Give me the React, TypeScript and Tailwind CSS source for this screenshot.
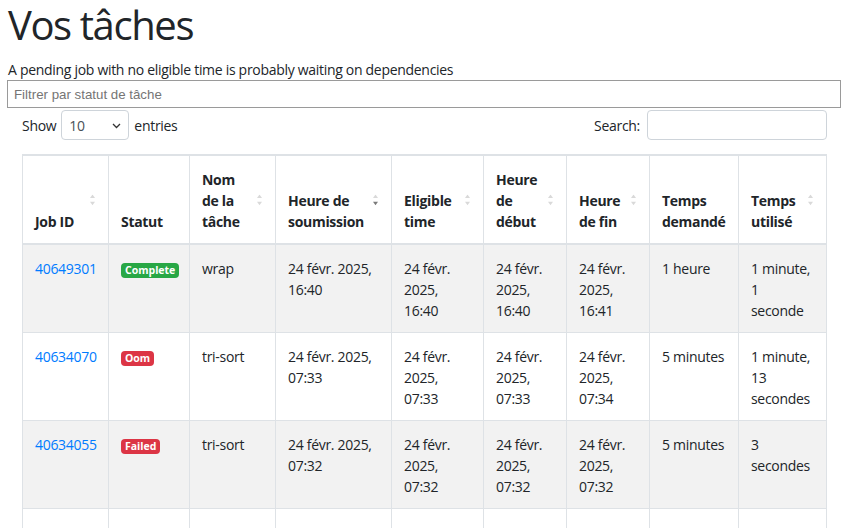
import React from "react";

type Col = { w: number; label: React.ReactNode; sort: "none" | "off" | "desc" };

const cols: Col[] = [
  { w: 87, label: <>Job ID</>, sort: "off" },
  { w: 81, label: <>Statut</>, sort: "none" },
  { w: 86, label: <>Nom<br />de la<br />tâche</>, sort: "off" },
  { w: 116, label: <>Heure de<br />soumission</>, sort: "desc" },
  { w: 92, label: <>Eligible<br />time</>, sort: "off" },
  { w: 83, label: <>Heure<br />de<br />début</>, sort: "off" },
  { w: 83, label: <>Heure<br />de fin</>, sort: "off" },
  { w: 89, label: <>Temps<br />demandé</>, sort: "none" },
  { w: 88, label: <>Temps<br />utilisé</>, sort: "off" },
];

type Row = {
  id: string;
  status: "Complete" | "Oom" | "Failed";
  name: string;
  submit: string[];
  eligible: string[];
  start: string[];
  end: string[];
  req: string;
  used: string[];
};

const rows: Row[] = [
  {
    id: "40649301",
    status: "Complete",
    name: "wrap",
    submit: ["24 févr. 2025,", "16:40"],
    eligible: ["24 févr.", "2025,", "16:40"],
    start: ["24 févr.", "2025,", "16:40"],
    end: ["24 févr.", "2025,", "16:41"],
    req: "1 heure",
    used: ["1 minute,", "1", "seconde"],
  },
  {
    id: "40634070",
    status: "Oom",
    name: "tri-sort",
    submit: ["24 févr. 2025,", "07:33"],
    eligible: ["24 févr.", "2025,", "07:33"],
    start: ["24 févr.", "2025,", "07:33"],
    end: ["24 févr.", "2025,", "07:34"],
    req: "5 minutes",
    used: ["1 minute,", "13", "secondes"],
  },
  {
    id: "40634055",
    status: "Failed",
    name: "tri-sort",
    submit: ["24 févr. 2025,", "07:32"],
    eligible: ["24 févr.", "2025,", "07:32"],
    start: ["24 févr.", "2025,", "07:32"],
    end: ["24 févr.", "2025,", "07:32"],
    req: "5 minutes",
    used: ["3", "secondes"],
  },
];

function SortIcon({ active }: { active: boolean }) {
  return (
    <svg
      width="5"
      height="11"
      viewBox="0 0 5 11"
      className="absolute right-[13px] top-1/2 -translate-y-1/2"
    >
      <path d="M2.5 0 L5 3.6 L0 3.6 Z" fill="#d9d9d9" />
      <path d="M0 7.2 L5 7.2 L2.5 10.8 Z" fill={active ? "#7a7a7a" : "#d9d9d9"} />
    </svg>
  );
}

function Lines({ l }: { l: string[] }) {
  return (
    <>
      {l.map((s, i) => (
        <div key={i} className="whitespace-nowrap">
          {s}
        </div>
      ))}
    </>
  );
}

function Badge({ status }: { status: Row["status"] }) {
  const bg = status === "Complete" ? "bg-[#28a745]" : "bg-[#dc3545]";
  return (
    <span
      className={`${bg} inline-block rounded-[4px] px-[4px] py-[2px] align-[0px] text-[10.5px] font-bold leading-none tracking-normal text-white`}
    >
      {status}
    </span>
  );
}

export default function App() {
  return (
    <div className="h-[528px] w-[848px] overflow-hidden bg-white font-['Open_Sans',sans-serif] text-[14px] leading-[21px] tracking-[-0.3px] text-[#212529]">
      <div className="px-[8px]">
        <h1 className="mt-px mb-[10px] text-[40px] font-normal leading-[48px] tracking-[-1.4px]">
          Vos tâches
        </h1>
        <p className="text-[14px] leading-[21px]">
          A pending job with no eligible time is probably waiting on dependencies
        </p>
      </div>
      <div className="pl-[7px]">
        <div className="flex h-[28px] w-[834px] items-center border border-[#9a9a9a] px-[6px] font-['Liberation_Sans',Arial,sans-serif] text-[13.3px] tracking-normal text-[#757575]">
          Filtrer par statut de tâche
        </div>
      </div>
      <div className="px-[22px]">
        <div className="mt-[2px] flex h-[30px] w-[805px] items-center justify-between">
          <div className="flex items-center">
            <span>Show</span>
            <div className="relative mx-[5px] flex h-[30px] w-[68px] items-center rounded-[4px] border border-[#ced4da] pl-[7px] text-[#495057]">
              10
              <svg
                width="9"
                height="6"
                viewBox="0 0 9 6"
                className="absolute right-[7px] top-[12px]"
              >
                <path d="M1 1 L4.5 4.5 L8 1" fill="none" stroke="#333" strokeWidth="1.3" />
              </svg>
            </div>
            <span>entries</span>
          </div>
          <div className="flex items-center">
            <span className="mr-[7px]">Search:</span>
            <div className="h-[30px] w-[180px] rounded-[4px] border border-[#ced4da]" />
          </div>
        </div>

        <table className="mt-[14px] w-[805px] table-fixed border-separate border-spacing-0">
          <colgroup>
            {cols.map((c, i) => (
              <col key={i} style={{ width: c.w }} />
            ))}
          </colgroup>
          <thead>
            <tr>
              {cols.map((c, i) => (
                <th
                  key={i}
                  className={`relative border-t-2 border-r border-b-2 border-[#dee2e6] px-3 pt-[13px] pb-[11px] text-left align-bottom font-bold whitespace-nowrap ${
                    i === 0 ? "border-l" : ""
                  }`}
                >
                  {c.label}
                  {c.sort !== "none" && <SortIcon active={c.sort === "desc"} />}
                </th>
              ))}
            </tr>
          </thead>
          <tbody>
            {rows.map((r, ri) => {
              const bg = ri % 2 === 0 ? "bg-[#f2f2f2]" : "bg-white";
              const td = `border-r border-b border-[#dee2e6] px-3 pt-[13px] pb-[11px] align-top ${bg}`;
              return (
                <tr key={r.id}>
                  <td className={`${td} border-l`}>
                    <span className="text-[#007bff]">{r.id}</span>
                  </td>
                  <td className={td}>
                    <Badge status={r.status} />
                  </td>
                  <td className={td}>{r.name}</td>
                  <td className={td}>
                    <Lines l={r.submit} />
                  </td>
                  <td className={td}>
                    <Lines l={r.eligible} />
                  </td>
                  <td className={td}>
                    <Lines l={r.start} />
                  </td>
                  <td className={td}>
                    <Lines l={r.end} />
                  </td>
                  <td className={`${td} whitespace-nowrap`}>{r.req}</td>
                  <td className={td}>
                    <Lines l={r.used} />
                  </td>
                </tr>
              );
            })}
            <tr>
              {cols.map((_, i) => (
                <td
                  key={i}
                  className={`h-[88px] border-r border-b border-[#dee2e6] bg-white ${i === 0 ? "border-l" : ""}`}
                />
              ))}
            </tr>
          </tbody>
        </table>
      </div>
    </div>
  );
}
